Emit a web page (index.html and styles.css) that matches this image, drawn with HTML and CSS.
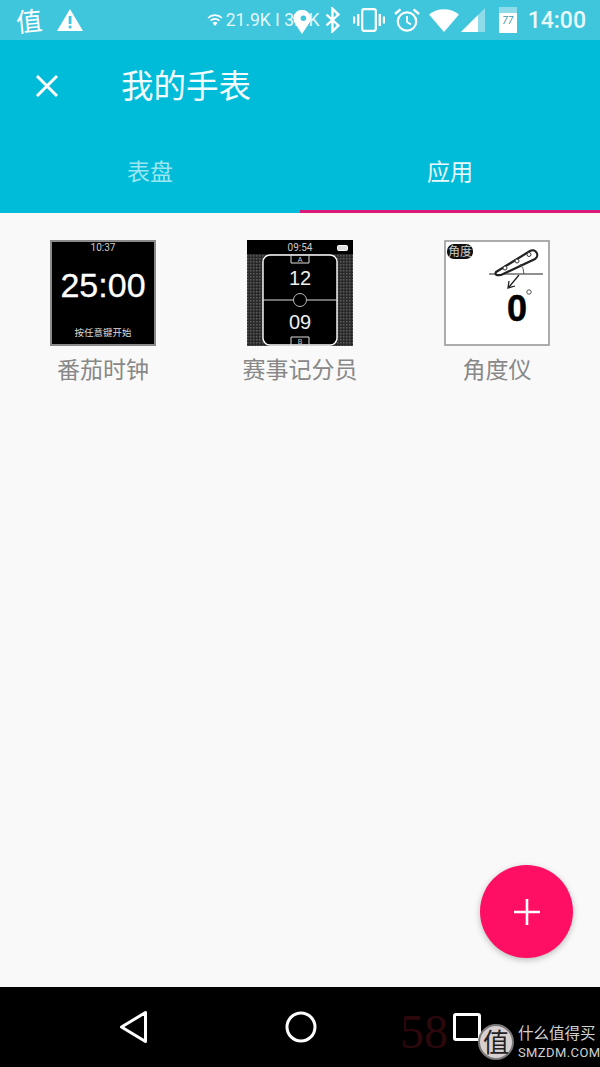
FILE: index.html
```html
<!DOCTYPE html>
<html lang="zh-CN">

<head>
    <meta charset="UTF-8">
    <meta name="viewport" content="width=device-width, initial-scale=1.0">
    <title>我的手表</title>
    <link rel="stylesheet" href="styles.css">
</head>

<body>
    <div class="screen">
        <!-- Status bar -->
        <div class="status-bar">
            <span class="status-logo">值</span>
            <svg class="warn" width="26" height="24" viewBox="0 0 26 24">
                <path d="M13 1 L26 23 L0 23 Z" fill="#fff" />
                <rect x="11.7" y="8" width="2.8" height="8" fill="#3fc5dc" />
                <rect x="11.7" y="17.6" width="2.8" height="2.8" fill="#3fc5dc" />
            </svg>
            <div class="status-right">
                <svg class="mini-wifi" width="16" height="14" viewBox="0 0 16 14">
                    <path d="M1 5 A10 10 0 0 1 15 5" fill="none" stroke="#fff" stroke-width="1.6" />
                    <path d="M3.6 7.6 A6.5 6.5 0 0 1 12.4 7.6" fill="none" stroke="#fff" stroke-width="1.6" />
                    <path d="M8 13 L5.6 10 A3.5 3.5 0 0 1 10.4 10 Z" fill="#fff" />
                </svg>
                <span class="speed">21.9K I 3.8K</span>
                <svg class="pin" width="20" height="24" viewBox="0 0 20 26">
                    <path d="M10 26 L2.6 15 A9.4 9.4 0 1 1 17.4 15 Z" fill="#fff" />
                    <circle cx="11.5" cy="9" r="3" fill="#3fc5dc" />
                </svg>
                <svg class="bt" width="16" height="26" viewBox="0 0 14 24">
                    <path d="M1 7 L12 17 L6.5 22.5 V1.5 L12 7 L1 17" fill="none" stroke="#fff" stroke-width="2.2" />
                </svg>
                <svg class="vibrate" width="32" height="24" viewBox="0 0 32 24">
                    <rect x="9.2" y="1.2" width="13.6" height="21.6" rx="2" fill="none" stroke="#fff" stroke-width="2.2" />
                    <rect x="4" y="6" width="2.4" height="12" fill="#fff" />
                    <rect x="25.6" y="6" width="2.4" height="12" fill="#fff" />
                    <rect x="0" y="8.5" width="2.2" height="7" fill="#fff" />
                    <rect x="29.8" y="8.5" width="2.2" height="7" fill="#fff" />
                </svg>
                <svg class="alarm" width="26" height="26" viewBox="0 0 26 26">
                    <circle cx="13" cy="14.5" r="9.2" fill="none" stroke="#fff" stroke-width="2.2" />
                    <path d="M13 9 V15 L17 17.4" fill="none" stroke="#fff" stroke-width="1.8" />
                    <path d="M1 7 L6.5 2.4 M25 7 L19.5 2.4" stroke="#fff" stroke-width="2.4" />
                </svg>
                <svg class="wifi" width="30" height="23" viewBox="0 0 30 23">
                    <path d="M15 23 L0 5.5 A24 24 0 0 1 30 5.5 Z" fill="#fff" />
                </svg>
                <svg class="signal" width="24" height="24" viewBox="0 0 24 24">
                    <path d="M0 24 L24 0 V24 Z" fill="#8edcea" />
                    <path d="M0 24 L17 7 V24 Z" fill="#fff" />
                </svg>
                <div class="battery">
                    <span class="battery-cap"></span>
                    <span class="battery-body">77</span>
                </div>
                <span class="clock">14:00</span>
            </div>
        </div>

        <!-- Toolbar and tabs -->
        <div class="toolbar">
            <svg class="close" width="24" height="24" viewBox="0 0 24 24">
                <path d="M2 2 L22 22 M22 2 L2 22" stroke="#fff" stroke-width="3" />
            </svg>
            <h1>我的手表</h1>
        </div>
        <div class="tabs">
            <div class="tab">表盘</div>
            <div class="tab active">应用</div>
        </div>

        <!-- Installed apps -->
        <div class="content">
            <div class="app">
                <div class="thumb">
                    <svg width="106" height="106" viewBox="0 0 106 106">
                        <rect x="1" y="1" width="104" height="104" fill="#000" stroke="#8a8a8a" stroke-width="2" />
                        <text x="53" y="11" class="w-small" text-anchor="middle">10:37</text>
                        <text x="53" y="57" class="w-time" text-anchor="middle">25:00</text>
                        <text x="53" y="96" class="w-hint" text-anchor="middle">按任意键开始</text>
                    </svg>
                </div>
                <div class="app-name">番茄时钟</div>
            </div>
            <div class="app">
                <div class="thumb">
                    <svg width="106" height="106" viewBox="0 0 106 106">
                        <defs>
                            <pattern id="hatch" width="3" height="3" patternUnits="userSpaceOnUse">
                                <rect width="3" height="3" fill="#2a2a2a" />
                                <rect width="1.5" height="1.5" fill="#5c5c5c" />
                            </pattern>
                        </defs>
                        <rect width="106" height="106" fill="url(#hatch)" />
                        <rect width="106" height="14" fill="#000" />
                        <text x="53" y="11" class="w-small" text-anchor="middle">09:54</text>
                        <rect x="90.5" y="5.5" width="10" height="5" rx="1" fill="#ddd" stroke="#fff" />
                        <rect x="16" y="15" width="74" height="90" rx="7" fill="#000" stroke="#fff" stroke-width="1.4" />
                        <path d="M16 60 H46 M60 60 H90" stroke="#ddd" stroke-width="1" />
                        <circle cx="53" cy="60" r="6.5" fill="none" stroke="#bbb" stroke-width="1" />
                        <path d="M44 15 V23 H62 V15 M44 105 V97 H62 V105" fill="none" stroke="#ddd" stroke-width="1" />
                        <text x="53" y="22" class="w-goal" text-anchor="middle">A</text>
                        <text x="53" y="104" class="w-goal" text-anchor="middle">B</text>
                        <text x="53" y="45" class="w-score" text-anchor="middle">12</text>
                        <text x="53" y="89" class="w-score" text-anchor="middle">09</text>
                    </svg>
                </div>
                <div class="app-name">赛事记分员</div>
            </div>
            <div class="app">
                <div class="thumb">
                    <svg width="106" height="106" viewBox="0 0 106 106">
                        <rect x="1" y="1" width="104" height="104" fill="#fff" stroke="#999" stroke-width="1.6" />
                        <rect x="3" y="4" width="26" height="15" rx="7" fill="#111" />
                        <text x="16" y="16" class="w-badge" text-anchor="middle">角度</text>
                        <path d="M45 34 H99" stroke="#222" stroke-width="1.2" />
                        <path d="M52 32 L86 11 A4.5 4.5 0 0 1 91 19 L57 35 Q50 36 52 32 Z" fill="#fff" stroke="#222" stroke-width="2.2" />
                        <circle cx="61" cy="28" r="2" fill="#fff" stroke="#333" />
                        <circle cx="73" cy="21" r="2" fill="#fff" stroke="#333" />
                        <circle cx="85" cy="14.5" r="2" fill="#fff" stroke="#333" />
                        <path d="M76 24 A14 14 0 0 1 80 34" fill="none" stroke="#555" />
                        <path d="M75 35 L65 47 M65 41 L64 48 L71 46" fill="none" stroke="#222" stroke-width="1.3" />
                        <text x="73" y="81" class="w-angle" text-anchor="middle">0</text>
                        <circle cx="85" cy="52" r="2.2" fill="none" stroke="#555" />
                    </svg>
                </div>
                <div class="app-name">角度仪</div>
            </div>
        </div>

        <button class="fab">
            <svg width="26" height="26" viewBox="0 0 26 26">
                <path d="M13 0 V26 M0 13 H26" stroke="#fff" stroke-width="2.6" />
            </svg>
        </button>

        <!-- Navigation bar -->
        <div class="nav-bar">
            <svg width="30" height="34" viewBox="0 0 30 34">
                <path d="M26.5 2.5 V31.5 L2.5 17 Z" fill="none" stroke="#fff" stroke-width="3" stroke-linejoin="round" />
            </svg>
            <svg width="32" height="32" viewBox="0 0 32 32">
                <circle cx="16" cy="16" r="14" fill="none" stroke="#fff" stroke-width="3" />
            </svg>
            <svg width="28" height="28" viewBox="0 0 28 28">
                <rect x="1.5" y="1.5" width="25" height="25" rx="1.5" fill="none" stroke="#fff" stroke-width="3" />
            </svg>
        </div>

        <!-- Site stamp over the nav bar -->
        <div class="stamp">
            <span class="stamp-red">58</span>
            <span class="stamp-badge">值</span>
            <div class="stamp-text">
                <span class="stamp-cn">什么值得买</span>
                <span class="stamp-en">SMZDM.COM</span>
            </div>
        </div>
    </div>
</body>

</html>
```

FILE: styles.css
```css
* {
    margin: 0;
    padding: 0;
    box-sizing: border-box;
}

body {
    font-family: Roboto, "Noto Sans CJK SC", sans-serif;
    background: #f9f9f9;
}

.screen {
    position: relative;
    width: 600px;
    height: 1067px;
    display: flex;
    flex-direction: column;
    overflow: hidden;
}

/* Status bar */
.status-bar {
    height: 40px;
    background: #3fc5dc;
    display: flex;
    align-items: center;
    padding: 0 14px 0 16px;
    color: #fff;
    flex-shrink: 0;
}

.status-logo {
    font-family: "Noto Sans CJK SC", sans-serif;
    font-size: 26px;
    line-height: 40px;
    transform: rotate(-6deg);
    margin-right: 15px;
}

.status-right {
    margin-left: auto;
    display: flex;
    align-items: center;
    position: relative;
}

.mini-wifi {
    margin-right: 3px;
}

.speed {
    font-size: 17.5px;
    width: 105px;
    white-space: nowrap;
    color: #e4f7fa;
}

.pin {
    position: absolute;
    left: 85px;
    top: 3px;
}

.bt {
    margin-left: -6px;
    margin-right: 12px;
}

.vibrate {
    margin-right: 9px;
}

.alarm {
    margin-right: 9px;
}

.wifi {
    margin-right: 2px;
}

.signal {
    margin-right: 14px;
}

.battery {
    width: 18px;
    height: 26px;
    display: flex;
    flex-direction: column;
    align-items: center;
    margin-right: 11px;
}

.battery-cap {
    width: 18px;
    height: 6px;
    background: #8edcea;
}

.battery-body {
    width: 18px;
    height: 20px;
    background: #fff;
    color: #3a9aac;
    font-size: 10px;
    font-style: italic;
    text-align: center;
    line-height: 16px;
}

.clock {
    font-size: 23px;
    font-weight: 500;
    color: #e8f8fb;
}

/* Toolbar and tabs */
.toolbar {
    height: 92px;
    background: #00bcd8;
    display: flex;
    align-items: center;
    padding: 0 35px;
    flex-shrink: 0;
}

.close {
    margin-right: 62px;
}

h1 {
    font-size: 32.5px;
    font-weight: 400;
    color: #f2fcfe;
    line-height: 1;
    margin-top: 2px;
}

.tabs {
    height: 81px;
    background: #00bcd8;
    display: flex;
    flex-shrink: 0;
}

.tab {
    flex: 1;
    text-align: center;
    font-size: 23px;
    line-height: 82px;
    color: #9ae6f1;
    border-bottom: 3px solid transparent;
}

.tab.active {
    color: #e8fafd;
    border-bottom-color: #d81b78;
}

/* Installed apps */
.content {
    flex: 1;
    background: #f9f9f9;
    display: grid;
    grid-template-columns: 197px 197px 197px;
    justify-content: center;
    align-content: start;
    padding-top: 27px;
}

.app {
    display: flex;
    flex-direction: column;
    align-items: center;
}

.thumb {
    width: 106px;
    height: 106px;
}

.thumb svg {
    display: block;
}

.app-name {
    font-size: 23px;
    line-height: 30px;
    margin-top: 10px;
    color: #888;
}

.w-small {
    font-family: Roboto, sans-serif;
    font-size: 10px;
    fill: #ccc;
}

.w-time {
    font-family: "Liberation Sans", sans-serif;
    font-size: 34px;
    fill: #fff;
    stroke: #fff;
    stroke-width: 0.3px;
}

.w-hint {
    font-family: "Noto Sans CJK SC", sans-serif;
    font-size: 9.5px;
    fill: #ddd;
}

.w-goal {
    font-family: "Liberation Sans", sans-serif;
    font-size: 7px;
    fill: #ccc;
}

.w-score {
    font-family: "Liberation Sans", sans-serif;
    font-size: 20px;
    fill: #eee;
}

.w-badge {
    font-family: "Noto Sans CJK SC", sans-serif;
    font-size: 12px;
    fill: #ccc;
}

.w-angle {
    font-family: "Liberation Sans", sans-serif;
    font-size: 36px;
    font-weight: 700;
    fill: #000;
    stroke: #000;
    stroke-width: 0.5px;
}

.fab {
    position: absolute;
    left: 480px;
    top: 865px;
    width: 93px;
    height: 93px;
    border: none;
    border-radius: 50%;
    background: #ff0f63;
    box-shadow: 0 2px 6px rgba(0, 0, 0, 0.25);
    display: flex;
    align-items: center;
    justify-content: center;
}

/* Navigation bar */
.nav-bar {
    height: 80px;
    background: #000;
    display: grid;
    grid-template-columns: 167px 167px 166px;
    flex-shrink: 0;
    align-items: center;
    justify-items: center;
    padding-left: 50px;
}

.nav-bar svg {
    display: block;
}

.stamp {
    position: absolute;
    left: 400px;
    top: 1006px;
    width: 200px;
    height: 58px;
}

.stamp-red {
    position: absolute;
    left: 0;
    top: -2px;
    font-family: "Liberation Serif", serif;
    font-size: 48px;
    color: #2c070b;
}

.stamp-badge {
    position: absolute;
    left: 78px;
    top: 18px;
    width: 36px;
    height: 36px;
    border-radius: 50%;
    background: #d8d0d0;
    border: 2px solid #777;
    color: #222;
    font-family: "Noto Sans CJK SC", sans-serif;
    font-size: 26px;
    line-height: 30px;
    text-align: center;
}

.stamp-text {
    position: absolute;
    left: 118px;
    top: 18px;
    display: flex;
    flex-direction: column;
    color: #d0d0d0;
}

.stamp-cn {
    font-size: 15.5px;
    line-height: 20px;
    white-space: nowrap;
}

.stamp-en {
    font-size: 13px;
    line-height: 18px;
    letter-spacing: 0.4px;
    white-space: nowrap;
}
```
